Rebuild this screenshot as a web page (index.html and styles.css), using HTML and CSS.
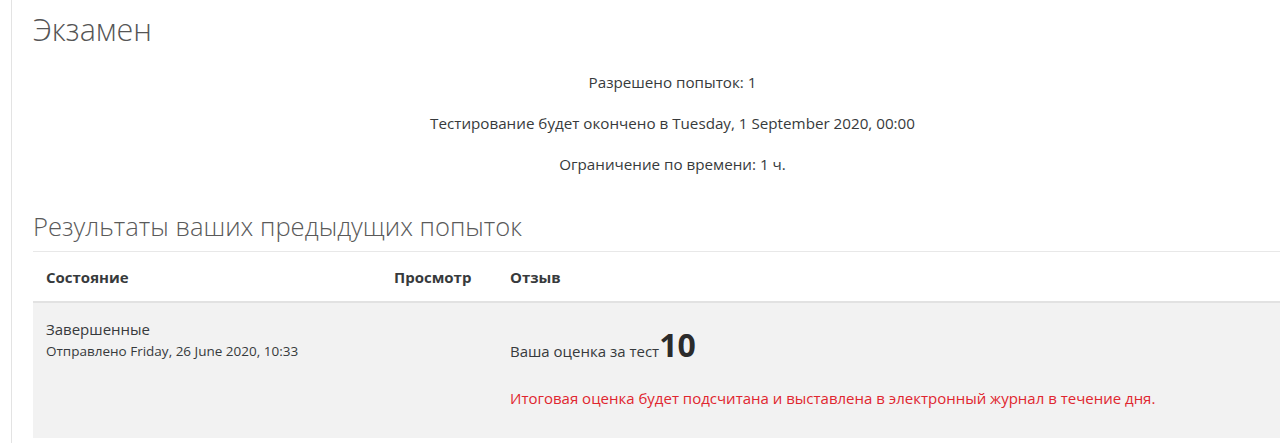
FILE: index.html
```html
<!DOCTYPE html>
<html lang="ru">
<head>
<meta charset="utf-8">
<title>Экзамен</title>
<link rel="stylesheet" href="styles.css">
</head>
<body>
<div class="page">
  <h2 class="title">Экзамен</h2>
  <div class="info">
    <p>Разрешено попыток: 1</p>
    <p>Тестирование будет окончено в Tuesday, 1 September 2020, 00:00</p>
    <p>Ограничение по времени: 1 ч.</p>
  </div>
  <h3 class="subtitle">Результаты ваших предыдущих попыток</h3>
  <table class="attempts">
    <thead>
      <tr>
        <th class="c-state">Состояние</th>
        <th class="c-review">Просмотр</th>
        <th class="c-feedback">Отзыв</th>
      </tr>
    </thead>
    <tbody>
      <tr>
        <td class="c-state">
          <div class="state">Завершенные</div>
          <div class="submitted">Отправлено Friday, 26 June 2020, 10:33</div>
        </td>
        <td class="c-review"></td>
        <td class="c-feedback">
          <p class="grade">Ваша оценка за тест<span class="score">10</span></p>
          <p class="notice">Итоговая оценка будет подсчитана и выставлена в электронный журнал в течение дня.</p>
        </td>
      </tr>
    </tbody>
  </table>
</div>
</body>
</html>
```
FILE: styles.css
```css
html, body {
  margin: 0;
  padding: 0;
  background: #ffffff;
  overflow: hidden;
}
body {
  font-family: "Open Sans", "Liberation Sans", sans-serif;
  font-size: 15px;
  color: #373a3c;
}
.page {
  margin-left: 11px;
  border-left: 1px solid #e3e3e3;
  padding-left: 21px;
  width: 1301px;
  height: 443px;
  padding-top: 10px;
  box-sizing: border-box;
}
.title {
  margin: 0;
  font-size: 30.5px;
  font-weight: 300;
  line-height: 38px;
  color: #555;
}
.info {
  text-align: center;
  font-size: 15.2px;
  margin-top: 24px;
}
.info p {
  margin: 0 0 20px 0;
  line-height: 21px;
}
.subtitle {
  margin: 36px 0 0 0;
  font-size: 25.6px;
  font-weight: 300;
  line-height: 32px;
  color: #5a5a5a;
  padding-bottom: 8px;
  border-bottom: 1px solid #e8e8e8;
}
.attempts {
  width: 100%;
  border-collapse: collapse;
}
.attempts th {
  text-align: left;
  font-weight: 700;
  font-size: 15px;
  padding: 16px 13px 15px;
  border-bottom: 2px solid #e2e2e2;
  line-height: 18px;
}
.c-state { width: 322px; }
.c-review { width: 90px; }
.attempts td {
  background: #f2f2f2;
  vertical-align: top;
  padding: 16px 13px 0;
  height: 119px;
}
.state {
  font-size: 15px;
  line-height: 21px;
}
.submitted {
  font-size: 13.5px;
  line-height: 22px;
}
.grade {
  margin: 6px 0 0 0;
  font-size: 15px;
  line-height: 40px;
}
.score {
  font-size: 32px;
  font-weight: 700;
  color: #2b2b2b;
}
.notice {
  margin: 17px 0 0 0;
  color: #e0262f;
  font-size: 15px;
  line-height: 20px;
}
```
